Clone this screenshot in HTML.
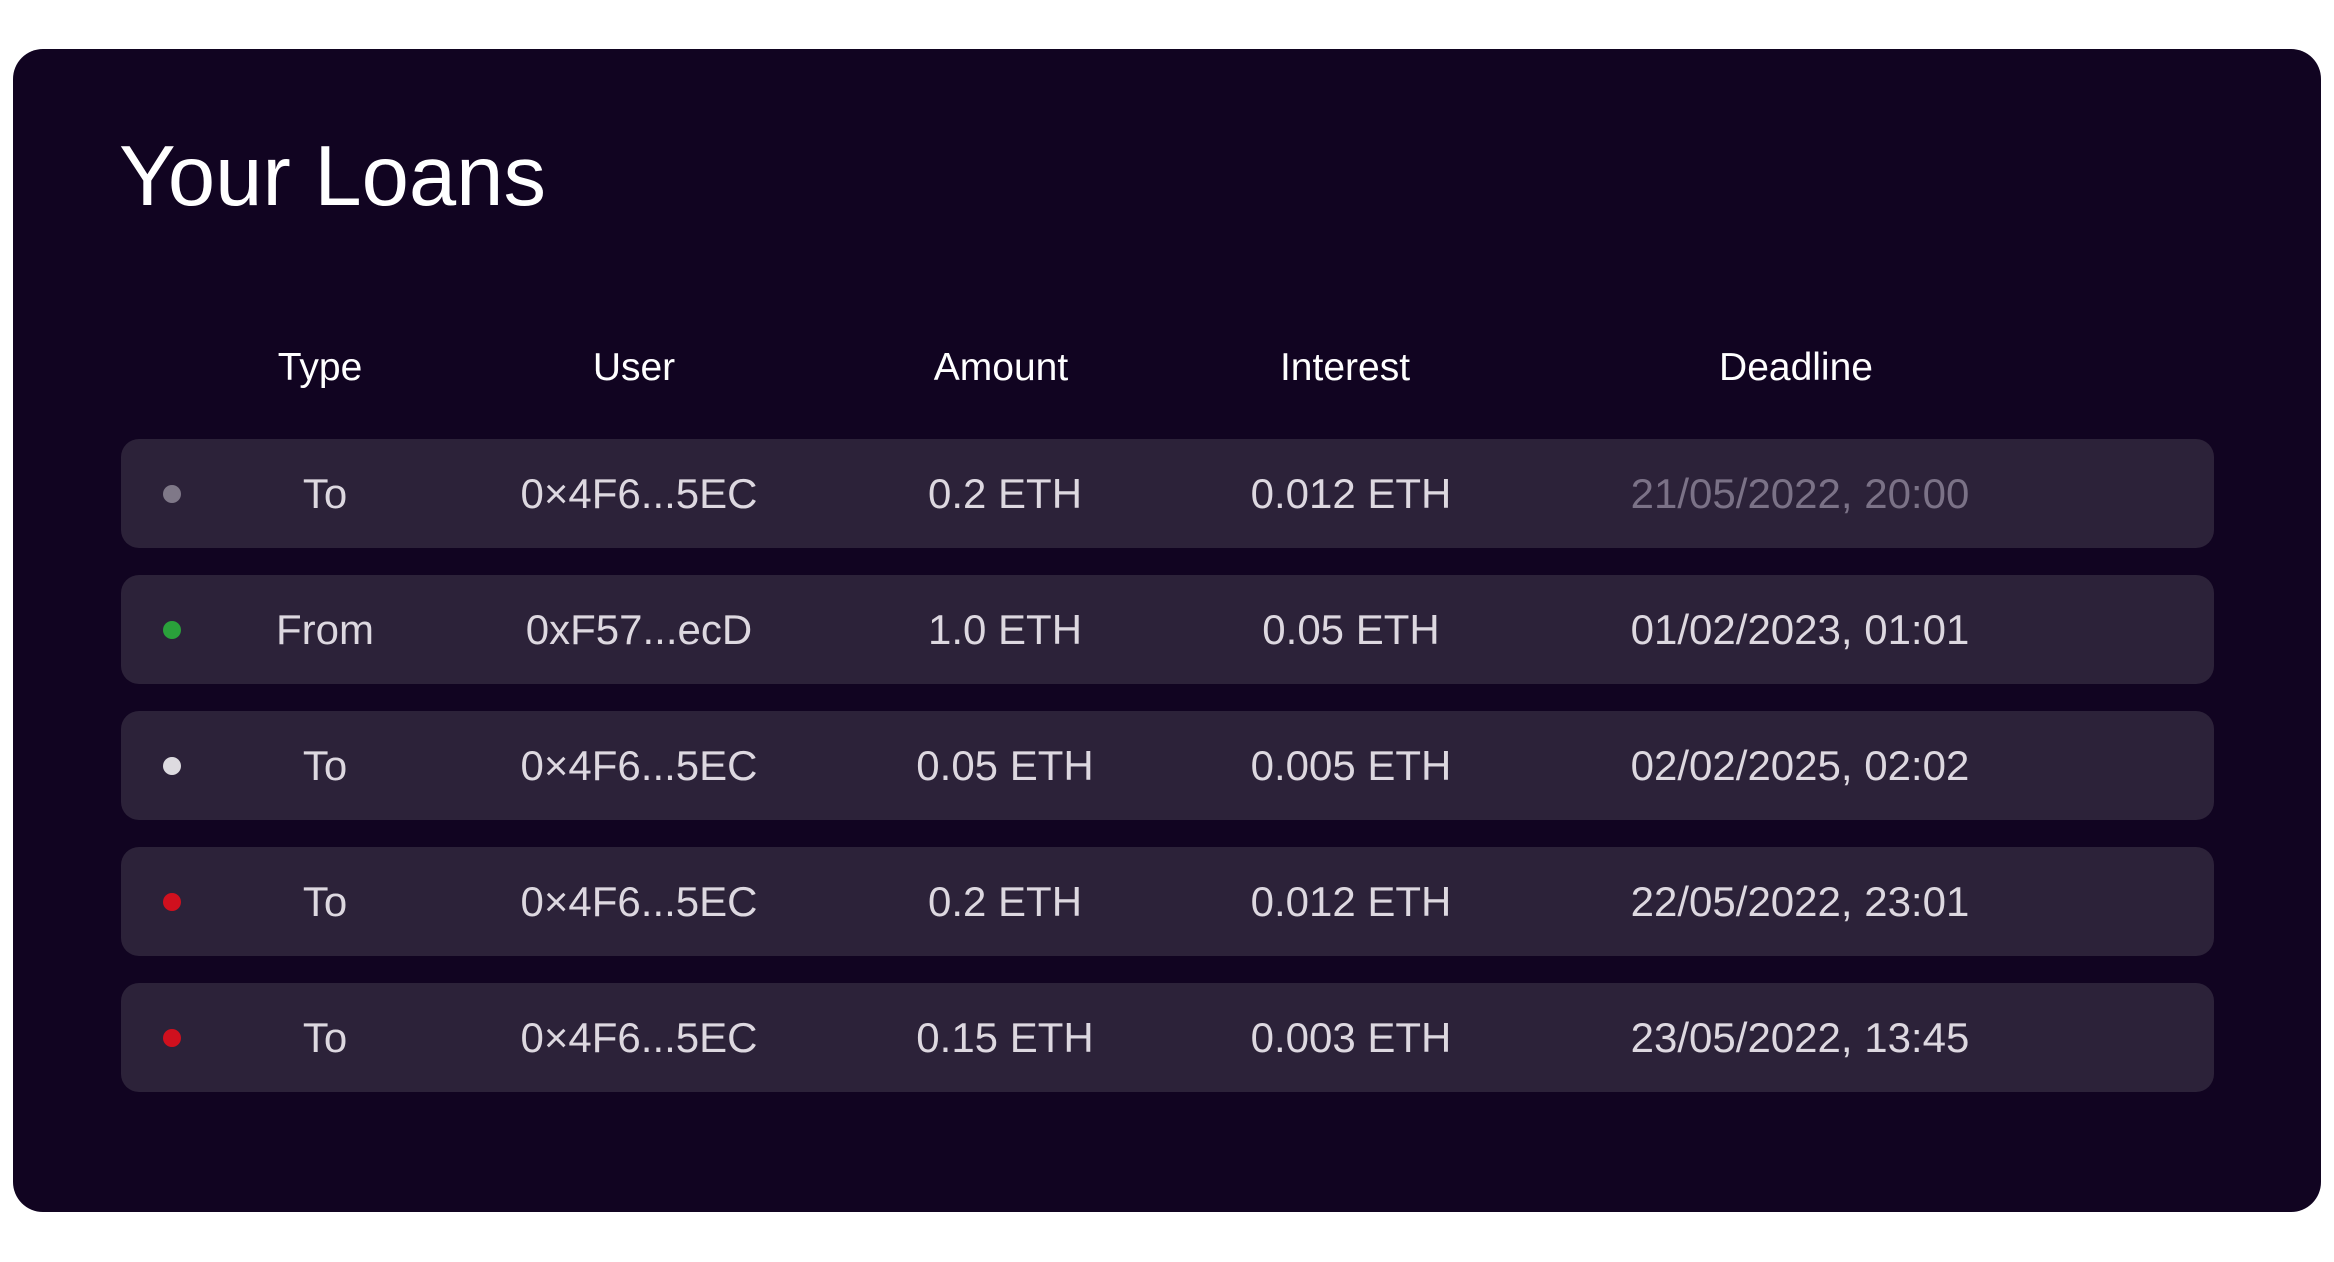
<!DOCTYPE html>
<html><head><meta charset="utf-8"><style>
html,body{margin:0;padding:0;background:#fff;width:2334px;height:1262px;overflow:hidden;font-family:"Liberation Sans",sans-serif}
.card{position:absolute;left:13px;top:49px;width:2308px;height:1163px;background:#110421;border-radius:30px}
.t{position:absolute;white-space:nowrap;transform:translateX(-50%);line-height:1}
h1{position:absolute;left:119px;top:134px;margin:0;font-weight:400;font-size:85px;color:#fff;line-height:1}
.h{color:#fff;font-size:39px;top:348px}
.row{position:absolute;left:121px;width:2093px;height:109px;background:#2c2239;border-radius:18px}
.row .t{top:34px;font-size:42px;color:#ddd8e0}
.dot{position:absolute;left:42px;top:46px;width:18px;height:18px;border-radius:50%}
</style></head><body>
<div class="card"></div>
<h1>Your Loans</h1>
<div class="t h" style="left:320px">Type</div>
<div class="t h" style="left:634px">User</div>
<div class="t h" style="left:1001px">Amount</div>
<div class="t h" style="left:1345px">Interest</div>
<div class="t h" style="left:1796px">Deadline</div>

<div class="row" style="top:439px"><div class="dot" style="background:#7f7888"></div>
<div class="t" style="left:204px">To</div><div class="t" style="left:518px">0×4F6...5EC</div><div class="t" style="left:884px">0.2 ETH</div><div class="t" style="left:1230px">0.012 ETH</div><div class="t" style="left:1679px;color:#7b7287">21/05/2022, 20:00</div></div>

<div class="row" style="top:575px"><div class="dot" style="background:#2aa13b"></div>
<div class="t" style="left:204px">From</div><div class="t" style="left:518px">0xF57...ecD</div><div class="t" style="left:884px">1.0 ETH</div><div class="t" style="left:1230px">0.05 ETH</div><div class="t" style="left:1679px">01/02/2023, 01:01</div></div>

<div class="row" style="top:711px"><div class="dot" style="background:#dddbe0"></div>
<div class="t" style="left:204px">To</div><div class="t" style="left:518px">0×4F6...5EC</div><div class="t" style="left:884px">0.05 ETH</div><div class="t" style="left:1230px">0.005 ETH</div><div class="t" style="left:1679px">02/02/2025, 02:02</div></div>

<div class="row" style="top:847px"><div class="dot" style="background:#d0101e"></div>
<div class="t" style="left:204px">To</div><div class="t" style="left:518px">0×4F6...5EC</div><div class="t" style="left:884px">0.2 ETH</div><div class="t" style="left:1230px">0.012 ETH</div><div class="t" style="left:1679px">22/05/2022, 23:01</div></div>

<div class="row" style="top:983px"><div class="dot" style="background:#d0101e"></div>
<div class="t" style="left:204px">To</div><div class="t" style="left:518px">0×4F6...5EC</div><div class="t" style="left:884px">0.15 ETH</div><div class="t" style="left:1230px">0.003 ETH</div><div class="t" style="left:1679px">23/05/2022, 13:45</div></div>
</body></html>
